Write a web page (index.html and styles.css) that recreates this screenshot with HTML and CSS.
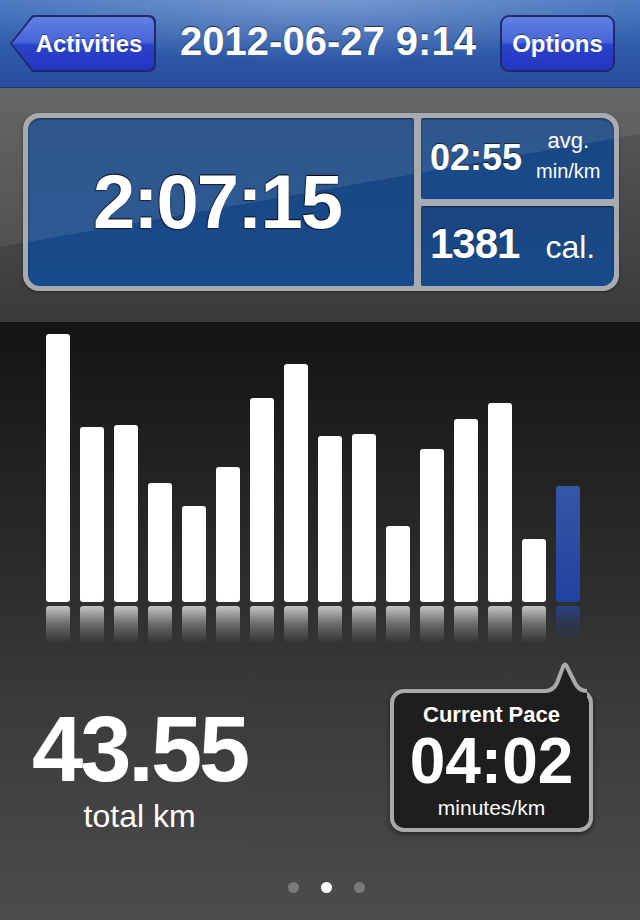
FILE: index.html
```html
<!DOCTYPE html>
<html>
<head>
  <title>Activity Summary</title>
  <link rel="stylesheet" href="styles.css">
</head>
<body>
  <header class="navbar">
    <a class="back-btn"><span class="back-face">Activities</span></a>
    <h1 class="title">2012-06-27 9:14</h1>
    <a class="nav-btn">Options</a>
  </header>

  <section class="overview">
    <div class="panel">
      <div class="cell cell-time">2:07:15</div>
      <div class="cell cell-pace">
        <span class="pace-value">02:55</span>
        <span class="pace-unit"><span class="unit-avg">avg.</span><span class="unit-min">min/km</span></span>
      </div>
      <div class="cell cell-cal">
        <span class="cal-value">1381</span>
        <span class="cal-unit">cal.</span>
      </div>
    </div>
  </section>

  <section class="graph">
    <div class="chart">
      <div class="col"><div class="bar" style="height:268px"></div><div class="refl"></div></div>
      <div class="col"><div class="bar" style="height:175px"></div><div class="refl"></div></div>
      <div class="col"><div class="bar" style="height:177px"></div><div class="refl"></div></div>
      <div class="col"><div class="bar" style="height:119px"></div><div class="refl"></div></div>
      <div class="col"><div class="bar" style="height:96px"></div><div class="refl"></div></div>
      <div class="col"><div class="bar" style="height:135px"></div><div class="refl"></div></div>
      <div class="col"><div class="bar" style="height:204px"></div><div class="refl"></div></div>
      <div class="col"><div class="bar" style="height:238px"></div><div class="refl"></div></div>
      <div class="col"><div class="bar" style="height:166px"></div><div class="refl"></div></div>
      <div class="col"><div class="bar" style="height:168px"></div><div class="refl"></div></div>
      <div class="col"><div class="bar" style="height:76px"></div><div class="refl"></div></div>
      <div class="col"><div class="bar" style="height:153px"></div><div class="refl"></div></div>
      <div class="col"><div class="bar" style="height:183px"></div><div class="refl"></div></div>
      <div class="col"><div class="bar" style="height:199px"></div><div class="refl"></div></div>
      <div class="col"><div class="bar" style="height:63px"></div><div class="refl"></div></div>
      <div class="col current"><div class="bar" style="height:116px"></div><div class="refl"></div></div>
    </div>

    <div class="totals">
      <div class="distance">
        <div class="distance-value">43.55</div>
        <div class="distance-label">total km</div>
      </div>
      <div class="pace-bubble">
        <svg class="bubble-tail" width="42" height="36" viewBox="0 0 42 36">
          <path d="M0 36 L0 30 Q8 30 12 22 L18 6 Q20 1 22 6 L30 22 Q34 30 42 30 L42 36 Z" fill="#1e1e1e"/>
          <path d="M0 30 Q8 30 12 22 L18 6 Q20 1 22 6 L30 22 Q34 30 42 30" fill="none" stroke="#a9a9a9" stroke-width="4" stroke-linejoin="round"/>
        </svg>
        <div class="bubble-title">Current Pace</div>
        <div class="bubble-value">04:02</div>
        <div class="bubble-unit">minutes/km</div>
      </div>
    </div>

    <div class="dots">
      <span class="dot"></span>
      <span class="dot active"></span>
      <span class="dot"></span>
    </div>
  </section>
</body>
</html>
```
FILE: styles.css
```css
body {
  margin: 0;
  width: 640px;
  height: 920px;
  overflow: hidden;
  background-color: #000;
  font-family: "Liberation Sans", Arial, sans-serif;
  color: #fff;
}

/* navigation bar */

.navbar {
  display: flex;
  justify-content: space-between;
  align-items: flex-start;
  height: 88px;
  box-sizing: border-box;
  padding: 15px 25px 0 10px;
  background:
    radial-gradient(ellipse 60% 70% at 50% 0%, rgba(255,255,255,0.25), rgba(255,255,255,0)),
    linear-gradient(#4675c0, #2f5aa9 60%, #284e9c);
  border-bottom: 1px solid #1e3a73;
}

.back-btn {
  display: block;
  width: 146px;
  height: 57px;
  padding: 2px;
  box-sizing: border-box;
  background-color: #1d2b6b;
  clip-path: path('M0 28.5 L21 1.5 Q22 0 24 0 H138 Q146 0 146 8 V49 Q146 57 138 57 H24 Q22 57 21 55.5 Z');
}

.back-face {
  display: flex;
  justify-content: center;
  align-items: center;
  width: 142px;
  height: 53px;
  box-sizing: border-box;
  padding-left: 12px;
  background: linear-gradient(#6580e2, #4763d9 48%, #2d43c9 52%, #2236c2);
  clip-path: path('M0 26.5 L20 1.5 Q21 0 23 0 H135 Q142 0 142 7 V46 Q142 53 135 53 H23 Q21 53 20 51.5 Z');
  font-size: 24px;
  line-height: 24px;
  font-weight: bold;
  text-shadow: 0 -1px 0 rgba(0,0,0,0.45);
}

.title {
  margin: 6px 0 0 0;
  font-size: 40px;
  line-height: 40px;
  font-weight: bold;
  text-shadow: 0 -1px 1px rgba(0,0,0,0.6);
}

.nav-btn {
  display: flex;
  justify-content: center;
  align-items: center;
  width: 115px;
  height: 57px;
  box-sizing: border-box;
  border: 2px solid #1d2b6b;
  border-radius: 9px;
  background: linear-gradient(#6580e2, #4763d9 48%, #2d43c9 52%, #2236c2);
  font-size: 24px;
  line-height: 24px;
  font-weight: bold;
  text-shadow: 0 -1px 0 rgba(0,0,0,0.45);
}

/* time / pace / calories panel */

.overview {
  height: 234px;
  box-sizing: border-box;
  padding: 25px 21px 0 23px;
  background:
    linear-gradient(170deg, rgba(255,255,255,0.07) 23.9%, rgba(255,255,255,0) 23.9%) fixed,
    linear-gradient(#5a5a5a, #3a3a3a);
}

.panel {
  display: grid;
  grid-template-columns: 1fr 193px;
  grid-template-rows: 1fr 1fr;
  gap: 7px;
  height: 178px;
  box-sizing: border-box;
  padding: 5px;
  background-color: #a7abb0;
  border-radius: 16px;
  box-shadow: 0 1px 3px rgba(0,0,0,0.4);
}

.cell {
  display: flex;
  align-items: center;
  background:
    linear-gradient(170deg, rgba(255,255,255,0.09) 23.9%, rgba(255,255,255,0) 23.9%) fixed,
    linear-gradient(#1a4580, #184b8c);
  box-shadow: inset 0 1px 2px rgba(0,0,0,0.5);
}

.cell-time {
  grid-row: 1 / span 2;
  justify-content: center;
  padding-right: 8px;
  border-radius: 12px 2px 2px 12px;
  font-size: 76px;
  line-height: 76px;
  font-weight: bold;
  letter-spacing: -2px;
  text-shadow: 0 -1px 1px #000, -1px 1px 1px rgba(0,0,0,0.6);
}

.cell-pace {
  padding-left: 9px;
  border-radius: 2px 12px 2px 2px;
}

.pace-value {
  font-size: 36px;
  line-height: 36px;
  font-weight: bold;
  text-shadow: 0 -1px 1px rgba(0,0,0,0.6);
}

.pace-unit {
  display: flex;
  flex-direction: column;
  align-items: center;
  margin: 0 0 6px 14px;
}

.unit-avg {
  font-size: 22px;
  line-height: 26px;
}

.unit-min {
  margin-top: 5px;
  font-size: 20px;
  line-height: 24px;
}

.cell-cal {
  align-items: baseline;
  align-content: center;
  flex-wrap: wrap;
  padding-left: 9px;
  border-radius: 2px 2px 12px 2px;
}

.cal-value {
  margin-bottom: 4px;
  font-size: 42px;
  line-height: 42px;
  font-weight: bold;
  letter-spacing: -1px;
  text-shadow: 0 -1px 1px rgba(0,0,0,0.6);
}

.cal-unit {
  margin-left: 26px;
  font-size: 32px;
  line-height: 32px;
}

/* split chart and totals */

.graph {
  height: 598px;
  background: linear-gradient(#141414, #2e2e2e 46%, #393939 61%, #4c4c4c);
}

.chart {
  display: flex;
  align-items: flex-end;
  gap: 10px;
  height: 321px;
  box-sizing: border-box;
  padding: 12px 0 0 46px;
}

.col {
  display: flex;
  flex-direction: column;
  width: 24px;
}

.bar {
  background-color: #fff;
  border-radius: 3px;
}

.refl {
  height: 37px;
  margin-top: 4px;
  border-radius: 3px 3px 0 0;
  background: linear-gradient(#c4c4c4, rgba(160,160,160,0.5) 50%, rgba(60,60,60,0));
}

.current .bar {
  background: linear-gradient(#3656a6, #2142a0);
}

.current .refl {
  background: linear-gradient(#2a4384, rgba(40,60,120,0.4) 50%, rgba(40,60,120,0));
}

.totals {
  display: flex;
  justify-content: space-between;
  align-items: flex-start;
  margin-top: 46px;
  padding: 0 47px 0 32px;
}

.distance {
  margin-top: 14px;
  text-align: center;
}

.distance-value {
  font-size: 92px;
  line-height: 92px;
  font-weight: bold;
  letter-spacing: -3px;
}

.distance-label {
  margin-top: 5px;
  font-size: 32px;
  line-height: 32px;
}

.pace-bubble {
  position: relative;
  width: 203px;
  height: 143px;
  box-sizing: border-box;
  padding-top: 11px;
  border: 4px solid #a9a9a9;
  border-radius: 14px;
  background-color: #1e1e1e;
  box-shadow: 0 2px 5px rgba(0,0,0,0.5);
  text-align: center;
}

.bubble-tail {
  position: absolute;
  top: -32px;
  left: 151px;
}

.bubble-title {
  font-size: 22px;
  line-height: 22px;
  font-weight: bold;
}

.bubble-value {
  margin-top: 3px;
  font-size: 64px;
  line-height: 64px;
  font-weight: bold;
}

.bubble-unit {
  margin-top: 4px;
  font-size: 21px;
  line-height: 21px;
}

.dots {
  display: flex;
  justify-content: center;
  gap: 22px;
  margin-top: 50px;
  padding-left: 12px;
}

.dot {
  width: 11px;
  height: 11px;
  border-radius: 50%;
  background-color: #7a7a7a;
}

.dot.active {
  background-color: #fff;
}
```
